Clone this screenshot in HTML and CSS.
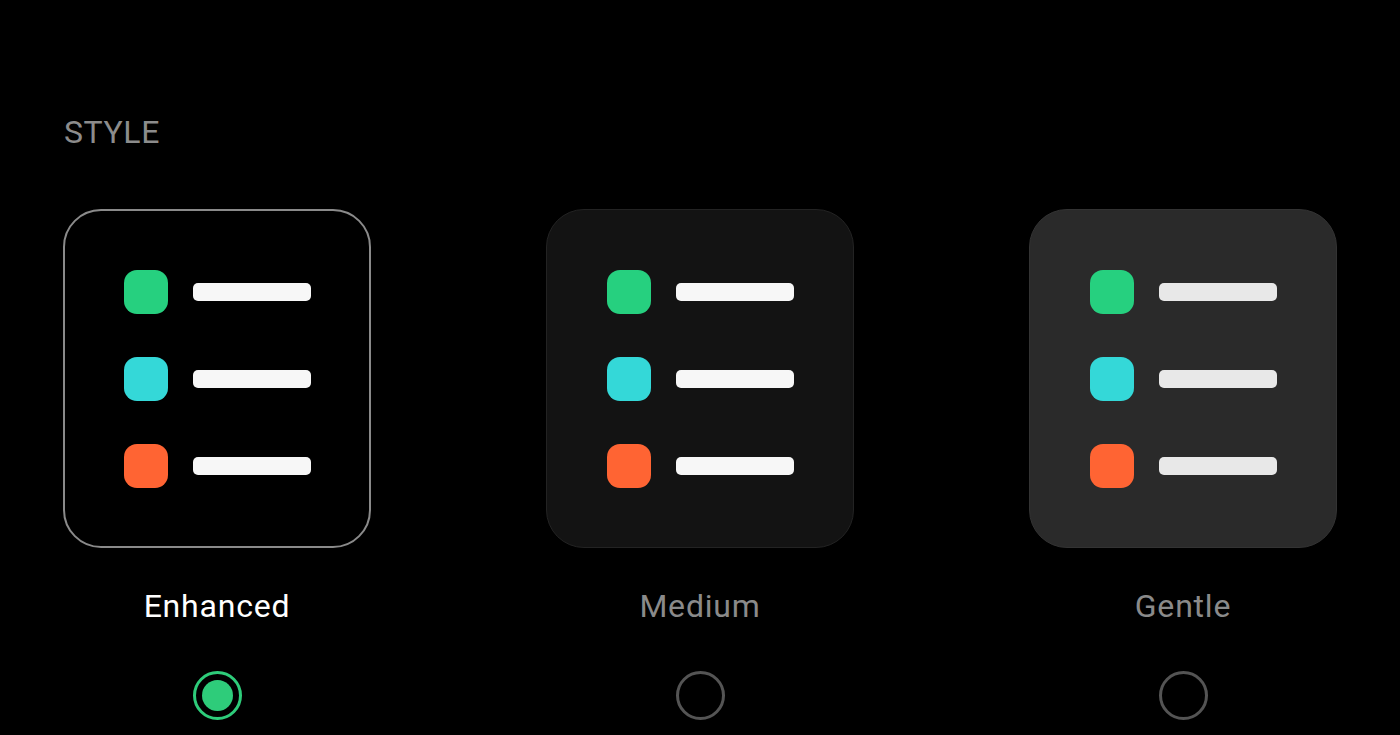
FILE: index.html
```html
<!DOCTYPE html>
<html>
<head>
<meta charset="utf-8">
<link rel="stylesheet" href="styles.css">
</head>
<body>
<div class="page">
  <div class="heading">STYLE</div>
  <div class="options">
    <div class="option">
      <div class="card card-enhanced">
        <div class="row"><span class="dot green"></span><span class="bar"></span></div>
        <div class="row"><span class="dot teal"></span><span class="bar"></span></div>
        <div class="row"><span class="dot orange"></span><span class="bar"></span></div>
      </div>
      <div class="label label-active">Enhanced</div>
      <div class="radio radio-on"><span class="radio-fill"></span></div>
    </div>
    <div class="option">
      <div class="card card-medium">
        <div class="row"><span class="dot green"></span><span class="bar"></span></div>
        <div class="row"><span class="dot teal"></span><span class="bar"></span></div>
        <div class="row"><span class="dot orange"></span><span class="bar"></span></div>
      </div>
      <div class="label">Medium</div>
      <div class="radio"></div>
    </div>
    <div class="option">
      <div class="card card-gentle">
        <div class="row"><span class="dot green"></span><span class="bar bar-soft"></span></div>
        <div class="row"><span class="dot teal"></span><span class="bar bar-soft"></span></div>
        <div class="row"><span class="dot orange"></span><span class="bar bar-soft"></span></div>
      </div>
      <div class="label">Gentle</div>
      <div class="radio"></div>
    </div>
  </div>
</div>
</body>
</html>
```

FILE: styles.css
```css
html, body {
  margin: 0;
  padding: 0;
  background: #000;
}
body {
  width: 1400px;
  height: 735px;
  overflow: hidden;
  font-family: Roboto, "Noto Sans", "Liberation Sans", sans-serif;
}
.page {
  padding: 112px 0 0 63px;
}
.heading {
  color: #8c8c8c;
  font-size: 32px;
  line-height: 40px;
  letter-spacing: 0.6px;
  padding-left: 1px;
}
.options {
  display: flex;
  gap: 175px;
  margin-top: 57px;
}
.option {
  width: 308px;
  display: flex;
  flex-direction: column;
  align-items: center;
}
.card {
  box-sizing: border-box;
  width: 308px;
  height: 339px;
  border-radius: 38px;
  display: flex;
  flex-direction: column;
  justify-content: center;
  align-items: center;
  gap: 43px;
}
.card-enhanced {
  background: #000;
  border: 2px solid #8a8a8a;
}
.card-medium {
  background: #131313;
  border: 1px solid #232323;
}
.card-gentle {
  background: #2a2a2a;
  border: 1px solid #333;
}
.row {
  display: flex;
  align-items: center;
  gap: 25px;
  width: 187px;
}
.dot {
  width: 44px;
  height: 44px;
  border-radius: 13px;
  flex: none;
}
.green { background: #26d07f; }
.teal { background: #34d8d8; }
.orange { background: #ff6433; }
.bar {
  width: 118px;
  height: 18px;
  border-radius: 5px;
  background: #f7f7f7;
  flex: none;
}
.bar-soft {
  background: #e8e8e8;
}
.label {
  margin-top: 38px;
  color: #8a8a8a;
  font-size: 32px;
  line-height: 40px;
  letter-spacing: 0.8px;
}
.label-active {
  color: #fff;
}
.radio {
  box-sizing: border-box;
  margin-top: 45px;
  width: 49px;
  height: 49px;
  border-radius: 50%;
  border: 3px solid #545454;
  display: flex;
  align-items: center;
  justify-content: center;
}
.radio-on {
  border: 3px solid #2ecc7a;
}
.radio-fill {
  width: 31px;
  height: 31px;
  border-radius: 50%;
  background: #2ecc7a;
}
```
